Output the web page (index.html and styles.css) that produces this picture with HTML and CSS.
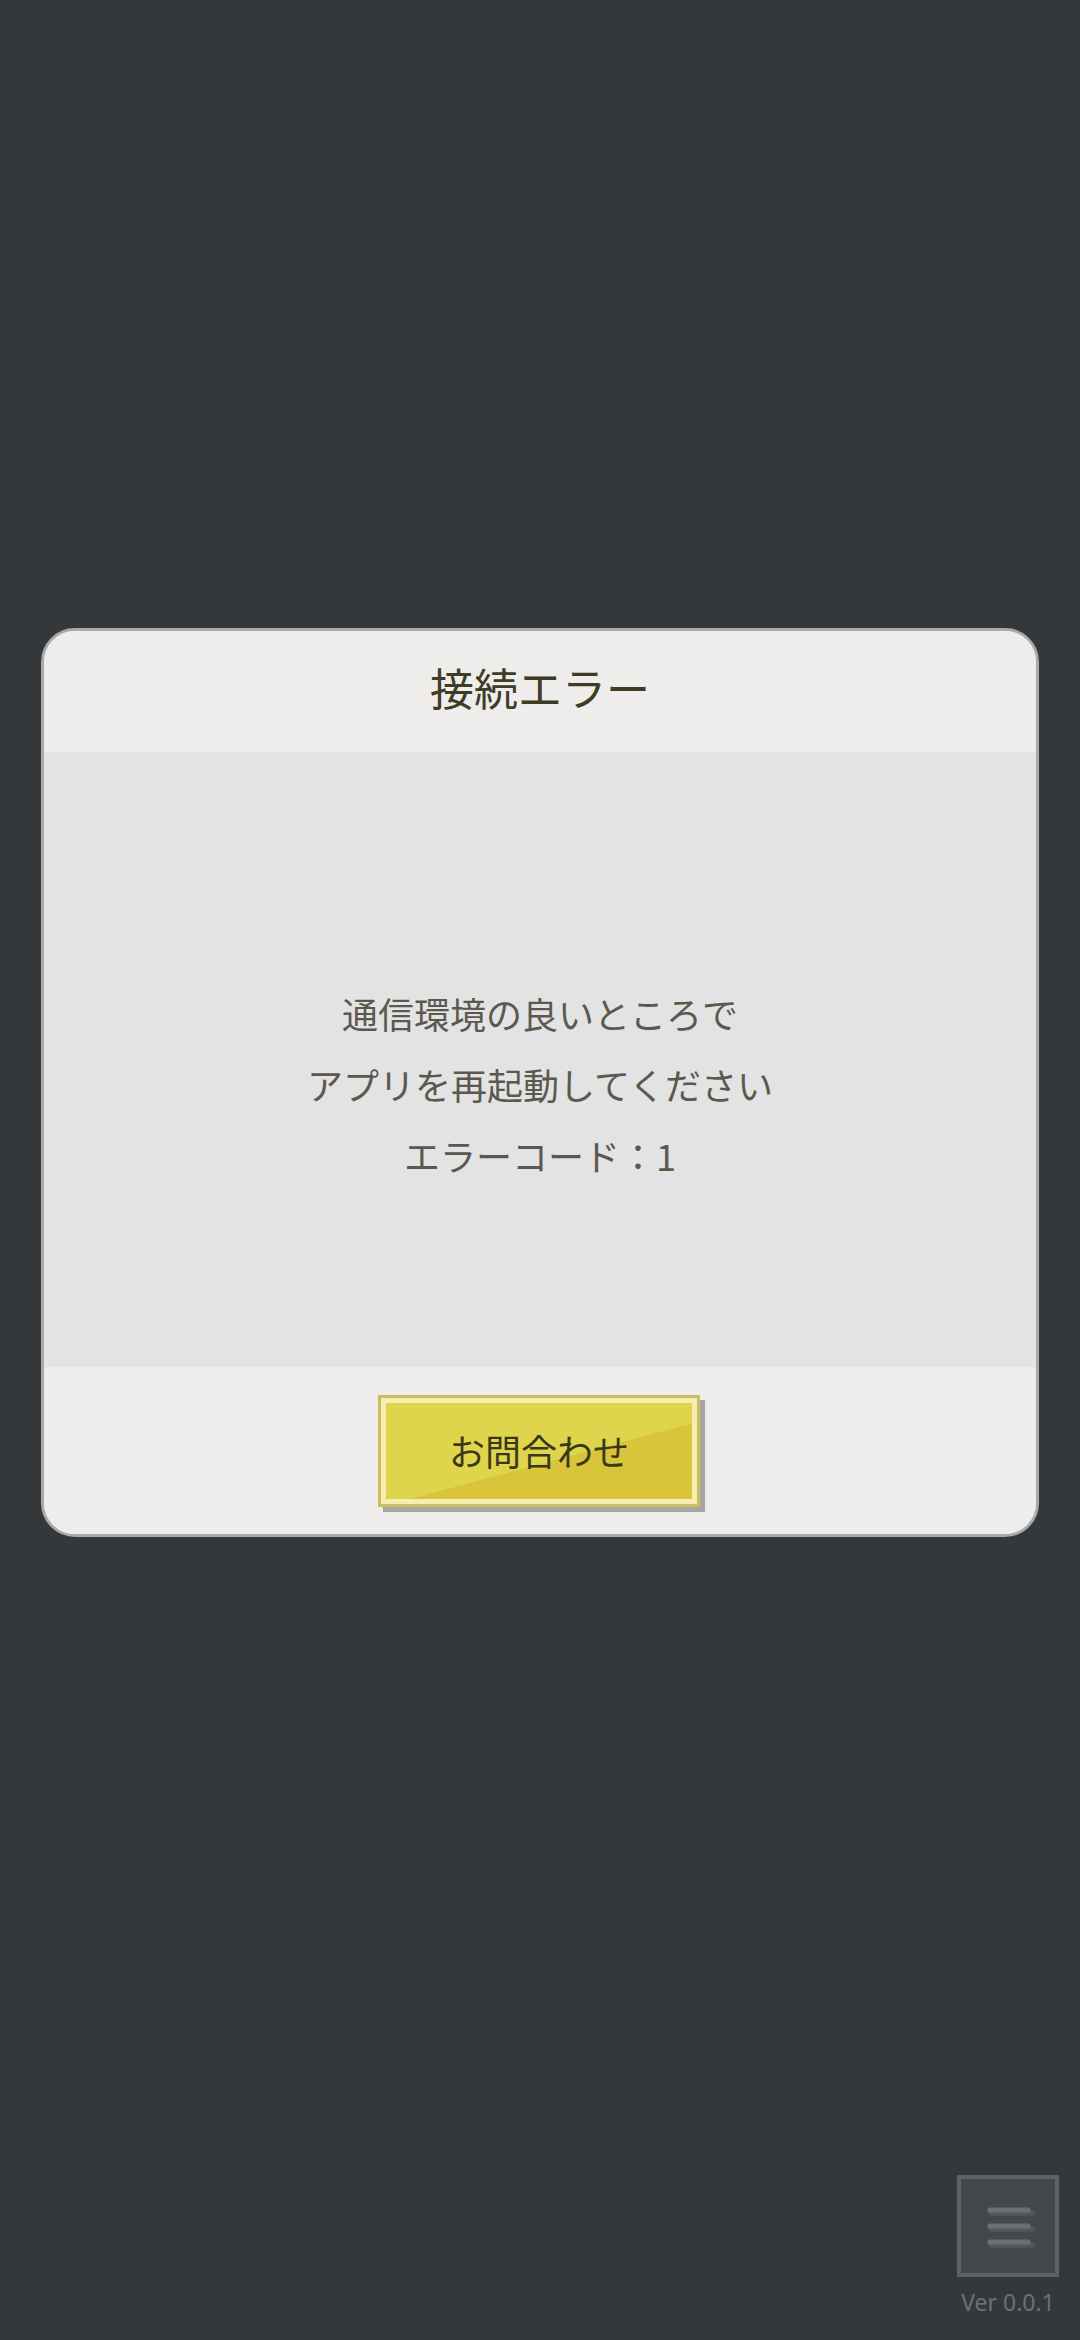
FILE: index.html
```html
<!DOCTYPE html>
<html lang="ja">
<head>
<meta charset="utf-8">
<title>接続エラー</title>
<link rel="stylesheet" href="styles.css">
</head>
<body>
<div class="page">
  <div class="dialog">
    <div class="dialog-header">接続エラー</div>
    <div class="dialog-body">
      <p class="msg">通信環境の良いところで</p>
      <p class="msg">アプリを再起動してください</p>
      <p class="msg">エラーコード：1</p>
    </div>
    <div class="dialog-footer">
      <button class="contact-btn">お問合わせ</button>
    </div>
  </div>
  <div class="corner">
    <div class="menu-btn">
      <svg width="94" height="94" viewBox="0 0 94 94">
        <g stroke="#55595c" stroke-width="5" stroke-linecap="round">
          <line x1="30" y1="34" x2="71" y2="34"/>
          <line x1="30" y1="50" x2="71" y2="50"/>
          <line x1="30" y1="66" x2="71" y2="66"/>
        </g>
        <g stroke="#6b6f72" stroke-width="5" stroke-linecap="round">
          <line x1="29" y1="31" x2="67" y2="31"/>
          <line x1="29" y1="47" x2="67" y2="47"/>
          <line x1="29" y1="63" x2="67" y2="63"/>
        </g>
      </svg>
    </div>
    <div class="version">Ver 0.0.1</div>
  </div>
</div>
</body>
</html>
```
FILE: styles.css
```css
html, body {
  margin: 0;
  padding: 0;
  background: #35383b;
}

.page {
  width: 1080px;
  height: 2340px;
  display: flex;
  flex-direction: column;
  font-family: "Noto Sans CJK JP", "Noto Sans", sans-serif;
}

.dialog {
  box-sizing: border-box;
  width: 998px;
  margin: 628px auto 0;
  border: 3px solid #a9a9a9;
  border-radius: 34px;
  overflow: hidden;
  background: #eeedeb;
  display: flex;
  flex-direction: column;
}

.dialog-header {
  box-sizing: border-box;
  height: 121px;
  padding-bottom: 10px;
  display: flex;
  align-items: center;
  justify-content: center;
  font-size: 44px;
  color: #3e3c25;
  background: #eeedeb;
}

.dialog-body {
  box-sizing: border-box;
  height: 615px;
  background: #e3e3e3;
  padding-top: 226px;
  display: flex;
  flex-direction: column;
  align-items: center;
}

.msg {
  margin: 0;
  font-size: 36px;
  line-height: 71px;
  height: 71px;
  color: #5b594f;
}

.dialog-footer {
  height: 167px;
  display: flex;
  align-items: center;
  justify-content: center;
  background: #eeedeb;
}

.contact-btn {
  box-sizing: border-box;
  width: 322px;
  height: 112px;
  margin-left: -2px;
  border: 3px solid #cabd62;
  background: linear-gradient(165deg, #dfd54c 0%, #dfd54c 57%, #d8c53a 57%, #d8c53a 100%);
  box-shadow: inset 0 0 0 5px #f6eeb1, 5px 5px 0 #a7a7a0;
  font-family: "Noto Sans CJK JP", "Noto Sans", sans-serif;
  font-size: 36px;
  color: #3b3819;
  padding: 0 0 2px;
  cursor: pointer;
}

.corner {
  margin-top: auto;
  align-self: flex-end;
  margin-right: 21px;
  padding-bottom: 23px;
  display: flex;
  flex-direction: column;
  align-items: center;
}

.menu-btn {
  box-sizing: border-box;
  width: 102px;
  height: 102px;
  border: 4px solid #5d6164;
  background: #44484b;
}

.menu-btn svg {
  display: block;
}

.version {
  margin-top: 10px;
  font-family: "Noto Sans", sans-serif;
  font-size: 23px;
  line-height: 30px;
  color: #6c7073;
}
```
